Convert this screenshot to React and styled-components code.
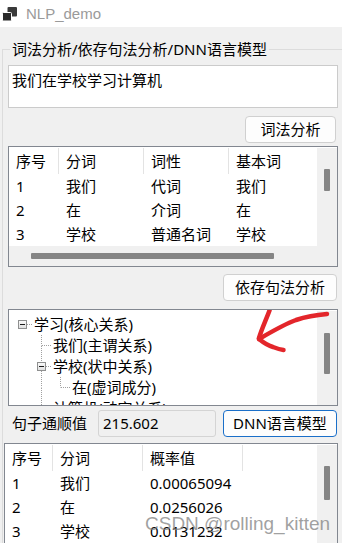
import React from 'react';
import styled, { createGlobalStyle } from 'styled-components';

const Global = createGlobalStyle`
  html, body { margin: 0; padding: 0; background: #f0f0f0; }
  body {
    font-family: "Noto Sans", "Noto Sans CJK SC", sans-serif;
    font-size: 15px;
    color: #000;
    overflow: hidden;
  }
  #root { width: 342px; height: 543px; overflow: hidden; }
`;

const Window = styled.div`
  position: relative;
  width: 342px;
  height: 543px;
  display: flex;
  flex-direction: column;
  background: #f0f0f0;
  overflow: hidden;
`;

const TitleBar = styled.div`
  flex: none;
  height: 27px;
  background: #fff;
  display: flex;
  align-items: center;
  gap: 9px;
  padding-left: 2px;
`;

const TitleText = styled.span`
  font-family: "Liberation Sans", "Noto Sans", sans-serif;
  font-size: 15px;
  color: #9a9a9a;
  line-height: 27px;
`;

const GroupBox = styled.div`
  margin: 13px 0 0 2px;
  display: flex;
  flex-direction: column;
  flex: none;
`;

const GroupHead = styled.div`
  display: flex;
  height: 18px;
  align-items: center;
  flex: none;
`;

const HeadCorner = styled.div`
  width: 8px;
  height: 9px;
  align-self: flex-end;
  border-top: 1px solid #dcdcdc;
  border-left: 1px solid #dcdcdc;
  box-sizing: border-box;
`;

const HeadLine = styled.div`
  flex: 1;
  height: 9px;
  align-self: flex-end;
  border-top: 1px solid #dcdcdc;
  box-sizing: border-box;
`;

const Legend = styled.span`
  padding: 0 2px;
  line-height: 18px;
  white-space: nowrap;
`;

const GroupBody = styled.div`
  border-left: 1px solid #dcdcdc;
  padding: 7px 4px 0 5px;
  display: flex;
  flex-direction: column;
  flex: none;
  & > * { flex: none; }
`;

const TextEdit = styled.div`
  height: 43px;
  box-sizing: border-box;
  border: 1px solid #cbcbcb;
  background: #fff;
  padding: 4px 3px;
  line-height: 20px;
`;

const ButtonRow = styled.div`
  display: flex;
  justify-content: flex-end;
  margin-top: ${p => p.$mt}px;
  padding-right: ${p => p.$pr}px;
`;

const Button = styled.button`
  width: ${p => p.$w}px;
  height: 27px;
  flex: none;
  box-sizing: border-box;
  padding: 0;
  border: 1px solid ${p => (p.$focus ? '#1a6fc9' : '#d0d0d0')};
  border-radius: 4px;
  background: #fdfdfd;
  font-family: inherit;
  font-size: 15px;
  line-height: 25px;
  color: #000;
  white-space: nowrap;
`;

const Frame = styled.div`
  margin-top: ${p => p.$mt}px;
  margin-left: ${p => p.$ml || 0}px;
  height: ${p => p.$h}px;
  box-sizing: border-box;
  border: 1px solid #828790;
  background: #fff;
  padding-top: 1px;
  display: grid;
  grid-template-columns: minmax(0, 1fr) 20px;
  grid-template-rows: ${p => (p.$hscroll ? 'minmax(0,1fr) 20px' : 'minmax(0,1fr)')};
  overflow: hidden;
  position: relative;
`;

const DataArea = styled.div`
  overflow: hidden;
  min-width: 0;
  min-height: 0;
`;

const Row = styled.div`
  display: grid;
  grid-template-columns: ${p => p.$cols};
  height: ${p => p.$h}px;
`;

const Cell = styled.div`
  padding-left: 7px;
  white-space: nowrap;
  overflow: hidden;
  line-height: ${p => p.$h}px;
  box-sizing: border-box;
  border-right: ${p => (p.$sep ? '1px solid #e3e3e3' : 'none')};
`;

const VScroll = styled.div`
  background: #f0f0f0;
  display: flex;
  flex-direction: column;
  align-items: center;
  padding-top: ${p => p.$offset}px;
  box-sizing: border-box;
  min-height: 0;
  overflow: hidden;
`;

const VThumb = styled.div`
  width: 6px;
  height: ${p => p.$len}px;
  background: #858585;
  border-radius: 1px;
  flex: none;
`;

const HScroll = styled.div`
  grid-column: 1 / -1;
  background: #f0f0f0;
  display: flex;
  align-items: center;
  padding-left: ${p => p.$offset}px;
`;

const HThumb = styled.div`
  width: ${p => p.$len}px;
  height: 6px;
  background: #858585;
  border-radius: 1px;
`;

const TreeList = styled.div`
  padding: 3px 0 0 4px;
  overflow: hidden;
  min-height: 0;
`;

const TreeRow = styled.div`
  display: flex;
  align-items: center;
  height: 21px;
`;

const TreeLabel = styled.span`
  padding-left: 2px;
  line-height: 21px;
  white-space: nowrap;
`;

const ArrowMark = styled.svg`
  position: absolute;
  left: 240px;
  top: -2px;
  overflow: visible;
  pointer-events: none;
`;

const BottomRow = styled.div`
  margin-top: 4px;
  height: 27px;
  display: flex;
  align-items: center;
  padding-left: 4px;
`;

const FieldLabel = styled.span`
  width: 86px;
  flex: none;
  line-height: 27px;
  white-space: nowrap;
`;

const ReadOnlyField = styled.div`
  width: 118px;
  flex: none;
  height: 27px;
  box-sizing: border-box;
  border: 1px solid #d4d4d4;
  border-radius: 3px;
  background: #f0f0f0;
  padding-left: 4px;
  line-height: 25px;
  margin-right: 7px;
`;

const Watermark = styled.div`
  position: absolute;
  left: 145px;
  top: 514px;
  font-family: "Liberation Sans", Arial, sans-serif;
  font-size: 19px;
  line-height: 19px;
  color: rgba(130, 130, 130, 0.75);
  white-space: nowrap;
  pointer-events: none;
`;

function AppIcon() {
  return (
    <svg width="15" height="16" viewBox="0 0 15 16">
      <rect x="5.5" y="1" width="9.5" height="9.5" rx="1" fill="#3a3a3a" />
      <rect x="0.5" y="6.5" width="9" height="8.5" rx="1" fill="#2a2a2a" stroke="#fff" strokeWidth="1" />
    </svg>
  );
}

function Branch({ up, down, right, box }) {
  const dot = { stroke: '#a0a0a0', strokeWidth: 1, strokeDasharray: '1 1', fill: 'none' };
  return (
    <svg width="19" height="21" viewBox="0 0 19 21" style={{ flex: 'none', display: 'block' }}>
      {up && <line x1="9.5" y1="0" x2="9.5" y2="10.5" {...dot} />}
      {down && <line x1="9.5" y1="11" x2="9.5" y2="21" {...dot} />}
      {right && <line x1="10" y1="10.5" x2="19" y2="10.5" {...dot} />}
      {box && (
        <>
          <defs>
            <linearGradient id="bx" x1="0" y1="0" x2="0" y2="1">
              <stop offset="0" stopColor="#fbfbfb" />
              <stop offset="1" stopColor="#dedede" />
            </linearGradient>
          </defs>
          <rect x="5.5" y="6.5" width="8" height="8" fill="url(#bx)" stroke="#8e8f8f" />
          <rect x="7" y="10" width="5" height="1" fill="#1b1b1b" />
        </>
      )}
    </svg>
  );
}

const tree = [
  { label: '学习(核心关系)', cells: [{ box: true, right: true }] },
  { label: '我们(主谓关系)', cells: [{}, { up: true, down: true, right: true }] },
  { label: '学校(状中关系)', cells: [{}, { up: true, down: true, right: true, box: true }] },
  { label: '在(虚词成分)', cells: [{}, { up: true, down: true }, { up: true, right: true }] },
  { label: '计算机(动宾关系)', cells: [{}, { up: true, right: true }] },
];

const t1Cols = '50px 85px 85px 120px';
const t1Head = ['序号', '分词', '词性', '基本词'];
const t1Rows = [
  ['1', '我们', '代词', '我们'],
  ['2', '在', '介词', '在'],
  ['3', '学校', '普通名词', '学校'],
  ['4', '学习', '动词', '学习'],
];

const t3Cols = '48px 90px 100px 1fr';
const t3Head = ['序号', '分词', '概率值', ''];
const t3Rows = [
  ['1', '我们', '0.00065094', ''],
  ['2', '在', '0.0256026', ''],
  ['3', '学校', '0.0131232', ''],
  ['4', '学习', '0.0412537', ''],
];

function Table({ cols, head, rows, sepCount }) {
  return (
    <DataArea>
      <Row $cols={cols} $h={26}>
        {head.map((h, i) => (
          <Cell key={i} $h={26} $sep={i < sepCount}>{h}</Cell>
        ))}
      </Row>
      {rows.map((r, ri) => (
        <Row key={ri} $cols={cols} $h={24}>
          {r.map((c, ci) => (
            <Cell key={ci} $h={24}>{c}</Cell>
          ))}
        </Row>
      ))}
    </DataArea>
  );
}

export default function App() {
  return (
    <Window>
      <Global />
      <TitleBar>
        <AppIcon />
        <TitleText>NLP_demo</TitleText>
      </TitleBar>
      <GroupBox>
        <GroupHead>
          <HeadCorner />
          <Legend>词法分析/依存句法分析/DNN语言模型</Legend>
          <HeadLine />
        </GroupHead>
        <GroupBody>
          <TextEdit>我们在学校学习计算机</TextEdit>
          <ButtonRow $mt={8} $pr={2}>
            <Button $w={91}>词法分析</Button>
          </ButtonRow>
          <Frame $mt={3} $h={121} $hscroll>
            <Table cols={t1Cols} head={t1Head} rows={t1Rows} sepCount={3} />
            <VScroll $offset={21}>
              <VThumb $len={22} />
            </VScroll>
            <HScroll $offset={22}>
              <HThumb $len={243} />
            </HScroll>
          </Frame>
          <ButtonRow $mt={7} $pr={1}>
            <Button $w={114}>依存句法分析</Button>
          </ButtonRow>
          <Frame $mt={8} $h={97}>
            <TreeList>
              {tree.map((n, i) => (
                <TreeRow key={i}>
                  {n.cells.map((c, ci) => (
                    <Branch key={ci} {...c} />
                  ))}
                  <TreeLabel>{n.label}</TreeLabel>
                </TreeRow>
              ))}
            </TreeList>
            <VScroll $offset={22}>
              <VThumb $len={41} />
            </VScroll>
            <ArrowMark width="92" height="50" viewBox="0 0 92 50">
              <g fill="none" stroke="#e3262b" strokeWidth="4.5" strokeLinecap="round" strokeLinejoin="round">
                <path d="M78 6 C 66 7, 56 9, 47 12 C 36 16, 22 24, 10 31" />
                <path d="M20.5 2.5 C 17 12, 13 20, 10 30" />
                <path d="M10 31 C 15 35, 20 38, 24 39 C 28 40.5, 31 41.5, 34.5 42" />
              </g>
            </ArrowMark>
          </Frame>
          <BottomRow>
            <FieldLabel>句子通顺值</FieldLabel>
            <ReadOnlyField>215.602</ReadOnlyField>
            <Button $w={114} $focus>DNN语言模型</Button>
          </BottomRow>
          <Frame $mt={6} $ml={-4} $h={120}>
            <Table cols={t3Cols} head={t3Head} rows={t3Rows} sepCount={3} />
            <VScroll $offset={21}>
              <VThumb $len={34} />
            </VScroll>
          </Frame>
        </GroupBody>
      </GroupBox>
      <Watermark>CSDN @rolling_kitten</Watermark>
    </Window>
  );
}
